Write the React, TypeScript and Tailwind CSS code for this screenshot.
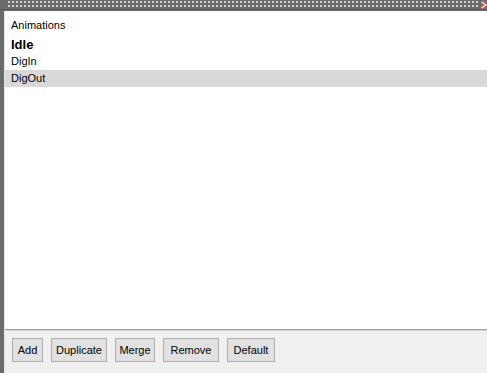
import React from "react";

const items = [
  { name: "Idle", bold: true, selected: false },
  { name: "DigIn", bold: false, selected: false },
  { name: "DigOut", bold: false, selected: true },
];

const buttons = [
  { label: "Add", w: "w-[31px]" },
  { label: "Duplicate", w: "w-[56px]" },
  { label: "Merge", w: "w-[40px]" },
  { label: "Remove", w: "w-[56px]" },
  { label: "Default", w: "w-[48px]" },
];

function Grip() {
  return (
    <svg width="487" height="10" className="block">
      <defs>
        <pattern id="dots" x="0" y="0" width="4" height="4" patternUnits="userSpaceOnUse">
          <rect x="0" y="1" width="2" height="2" fill="#d2d2d2" />
        </pattern>
      </defs>
      <rect x="0" y="0" width="487" height="10" fill="#6b6b6b" />
      <rect x="8" y="0" width="472" height="8" fill="url(#dots)" />
      <rect x="0" y="9" width="487" height="1" fill="#5a5a5a" />
      <rect x="481" y="1" width="6" height="8" fill="#b85a5a" />
      <path d="M481.5 2 L486 5 L481.5 8" stroke="#eeeeee" strokeWidth="1.3" fill="none" />
    </svg>
  );
}

export default function App() {
  return (
    <div
      className="w-[487px] h-[373px] flex flex-col bg-[#6b6b6b] overflow-hidden"
      style={{ fontFamily: '"Liberation Sans", Arial, sans-serif' }}
    >
      <div className="h-[11px] shrink-0 bg-[#6b6b6b]">
        <Grip />
      </div>
      <div className="flex flex-1 min-h-0">
        <div className="w-[4px] shrink-0 bg-[#6b6b6b]" />
        <div className="flex-1 flex flex-col border-l border-[#e6e6e6]">
          <div className="flex-1 bg-white flex flex-col text-[11px] text-black leading-[17px]">
            <div className="pl-[6px] pt-[6px] h-[25px]">Animations</div>
            {items.map((it) => (
              <div
                key={it.name}
                className={
                  "pl-[6px] h-[17px] " +
                  (it.selected ? "bg-[#d9d9d9] " : "") +
                  (it.bold ? "font-bold text-[13px]" : "")
                }
              >
                {it.name}
              </div>
            ))}
          </div>
          <div className="h-[2px] bg-[#a09ea8] border-b border-[#d4d4d4]" />
          <div className="h-[42px] shrink-0 bg-[#f0f0f0] flex items-start gap-[8px] pl-[7px] pt-[7px] text-[11px]">
            {buttons.map((b) => (
              <div
                key={b.label}
                className={
                  b.w +
                  " h-[24px] flex items-center justify-center bg-[#e1e1e1] border border-[#adadad] text-black"
                }
              >
                {b.label}
              </div>
            ))}
          </div>
        </div>
      </div>
    </div>
  );
}
